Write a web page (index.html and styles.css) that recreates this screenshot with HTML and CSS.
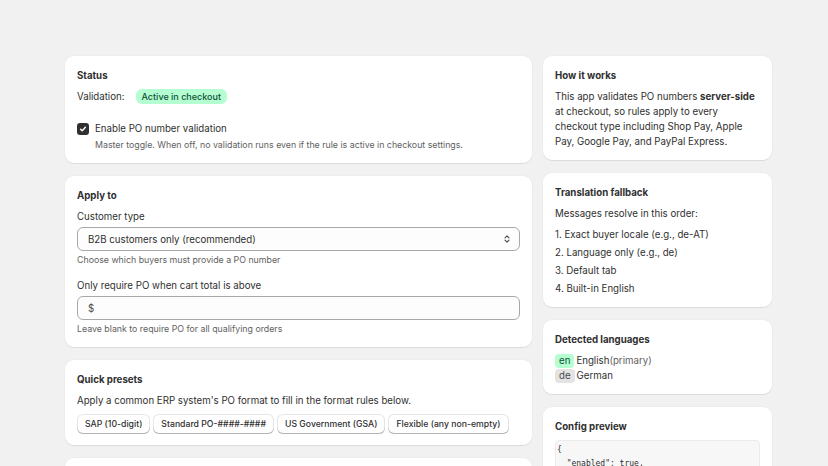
FILE: index.html
```html
<!DOCTYPE html>
<html>
<head>
<meta charset="utf-8">
<title>PO number validation</title>
<link rel="stylesheet" href="styles.css">
</head>
<body>
<div class="layout">
	<div class="col">
		<div class="card">
			<h2>Status</h2>
			<div class="status-row">
				<span>Validation:</span>
				<span class="badge">Active in checkout</span>
			</div>
			<div class="check">
				<div class="check-row">
					<span class="box">
						<svg width="8" height="8" viewBox="0 0 8 8"><path d="M1.6 4.2 3.2 5.8 6.4 2.2" fill="none" stroke="#fff" stroke-width="1.4" stroke-linecap="round" stroke-linejoin="round"/></svg>
					</span>
					<span>Enable PO number validation</span>
				</div>
				<p class="help indent">Master toggle. When off, no validation runs even if the rule is active in checkout settings.</p>
			</div>
		</div>

		<div class="card">
			<h2>Apply to</h2>
			<div class="field">
				<label>Customer type</label>
				<div class="select">
					<span>B2B customers only (recommended)</span>
					<svg width="8" height="10" viewBox="0 0 8 10"><path d="M2 3.8 4 1.8 6 3.8M2 6.2 4 8.2 6 6.2" fill="none" stroke="#4a4a4a" stroke-width="1.1" stroke-linecap="round" stroke-linejoin="round"/></svg>
				</div>
				<p class="help">Choose which buyers must provide a PO number</p>
			</div>
			<div class="field next">
				<label>Only require PO when cart total is above</label>
				<div class="input"><span class="prefix">$</span></div>
				<p class="help">Leave blank to require PO for all qualifying orders</p>
			</div>
		</div>

		<div class="card">
			<h2>Quick presets</h2>
			<p class="text">Apply a common ERP system's PO format to fill in the format rules below.</p>
			<div class="btn-group">
				<button>SAP (10-digit)</button>
				<button>Standard PO-####-####</button>
				<button>US Government (GSA)</button>
				<button>Flexible (any non-empty)</button>
			</div>
		</div>

		<div class="card">
			<h2>Format rules</h2>
			<p class="text">Define what a valid PO number looks like.</p>
		</div>
	</div>

	<div class="col">
		<div class="card">
			<h2>How it works</h2>
			<p class="text">This app validates PO numbers <b>server-side</b> at checkout, so rules apply to every checkout type including Shop Pay, Apple Pay, Google Pay, and PayPal Express.</p>
		</div>

		<div class="card">
			<h2>Translation fallback</h2>
			<p class="text">Messages resolve in this order:</p>
			<ol class="steps">
				<li>1. Exact buyer locale (e.g., de-AT)</li>
				<li>2. Language only (e.g., de)</li>
				<li>3. Default tab</li>
				<li>4. Built-in English</li>
			</ol>
		</div>

		<div class="card">
			<h2>Detected languages</h2>
			<ul class="langs">
				<li><span class="code primary">en</span>English<span class="muted">(primary)</span></li>
				<li><span class="code">de</span>German</li>
			</ul>
		</div>

		<div class="card">
			<h2>Config preview</h2>
<pre class="preview">{
  "enabled": true,
  "customerType": "b2b",
  "minCartTotal": null,
  "presets": []
}</pre>
		</div>
	</div>
</div>
</body>
</html>
```

FILE: styles.css
```css
* { margin: 0; padding: 0; box-sizing: border-box; }

body{
	background: #f1f1f1;
	font-family: Inter, "Noto Sans", sans-serif;
	font-size: 9.7px;
	line-height: 15px;
	color: #303030;
	height: 466px;
	overflow: hidden;
}

.layout{
	display: grid;
	grid-template-columns: 467px 229px;
	column-gap: 11px;
	margin: 56px 0 0 65px;
	align-items: start;
}

.col{
	display: flex;
	flex-direction: column;
	gap: 13px;
}

.card{
	background: #fff;
	border-radius: 9px;
	padding: 12px 12px 11px;
	box-shadow: 0 1px 0 0 rgba(26,26,26,.08), 0 0 0 1px rgba(26,26,26,.02);
	display: flex;
	flex-direction: column;
	gap: 6px;
}

.card h2{
	font-size: 9.7px;
	font-weight: 650;
	line-height: 15px;
}

.status-row{
	display: flex;
	align-items: center;
	gap: 11px;
	margin-bottom: 11px;
}

.badge{
	background: #b4fed2;
	color: #0c5132;
	font-size: 9px;
	font-weight: 550;
	padding: 0 6px;
	border-radius: 6px;
	line-height: 15px;
}

.check-row{
	display: flex;
	align-items: center;
	gap: 6px;
}

.box{
	width: 12px;
	height: 12px;
	border-radius: 3px;
	background: #303030;
	display: flex;
	align-items: center;
	justify-content: center;
}

.help{
	font-size: 8.8px;
	line-height: 14px;
	color: #616161;
}

.indent{
	margin-top: 2px;
	padding-left: 18px;
}

.field label{
	display: block;
	line-height: 15px;
	margin-bottom: 3px;
}

.field .help{
	margin-top: 2px;
}

.field.next{
	margin-top: 5px;
}

.select, .input{
	height: 24px;
	border: 1px solid #a8a8a8;
	border-radius: 6px;
	background: #fdfdfd;
	display: flex;
	align-items: center;
	justify-content: space-between;
	padding: 0 8px 0 10px;
}

.prefix{
	color: #4a4a4a;
}

.text{
	line-height: 15px;
}

.text b{
	font-weight: 650;
}

.btn-group{
	display: flex;
	gap: 3px;
}

button{
	flex: none;
	white-space: nowrap;
	font-family: inherit;
	font-size: 8.7px;
	font-weight: 550;
	color: #303030;
	background: #fff;
	border: none;
	border-radius: 6px;
	height: 20px;
	padding: 0 8px;
	box-shadow: inset 0 -1px 0 0 #b5b5b5, inset 0 0 0 1px rgba(0,0,0,.1);
}

.steps{
	list-style: none;
	display: flex;
	flex-direction: column;
	gap: 3px;
}

.langs{
	list-style: none;
}

.langs li{
	line-height: 15px;
}

.code{
	display: inline-block;
	padding: 0 4px;
	border-radius: 4px;
	background: #e3e3e3;
	color: #4a4a4a;
	line-height: 14px;
	margin-right: 2px;
}

.code.primary{
	background: #b4fed2;
	color: #0c5132;
}

.muted{
	color: #616161;
}

.preview{
	background: #f7f7f7;
	border: 1px solid #ebebeb;
	border-radius: 4px;
	padding: 2px 8px 6px 1px;
	font-family: "DejaVu Sans Mono", "Liberation Mono", monospace;
	font-size: 8px;
	line-height: 14px;
	color: #303030;
}
```
